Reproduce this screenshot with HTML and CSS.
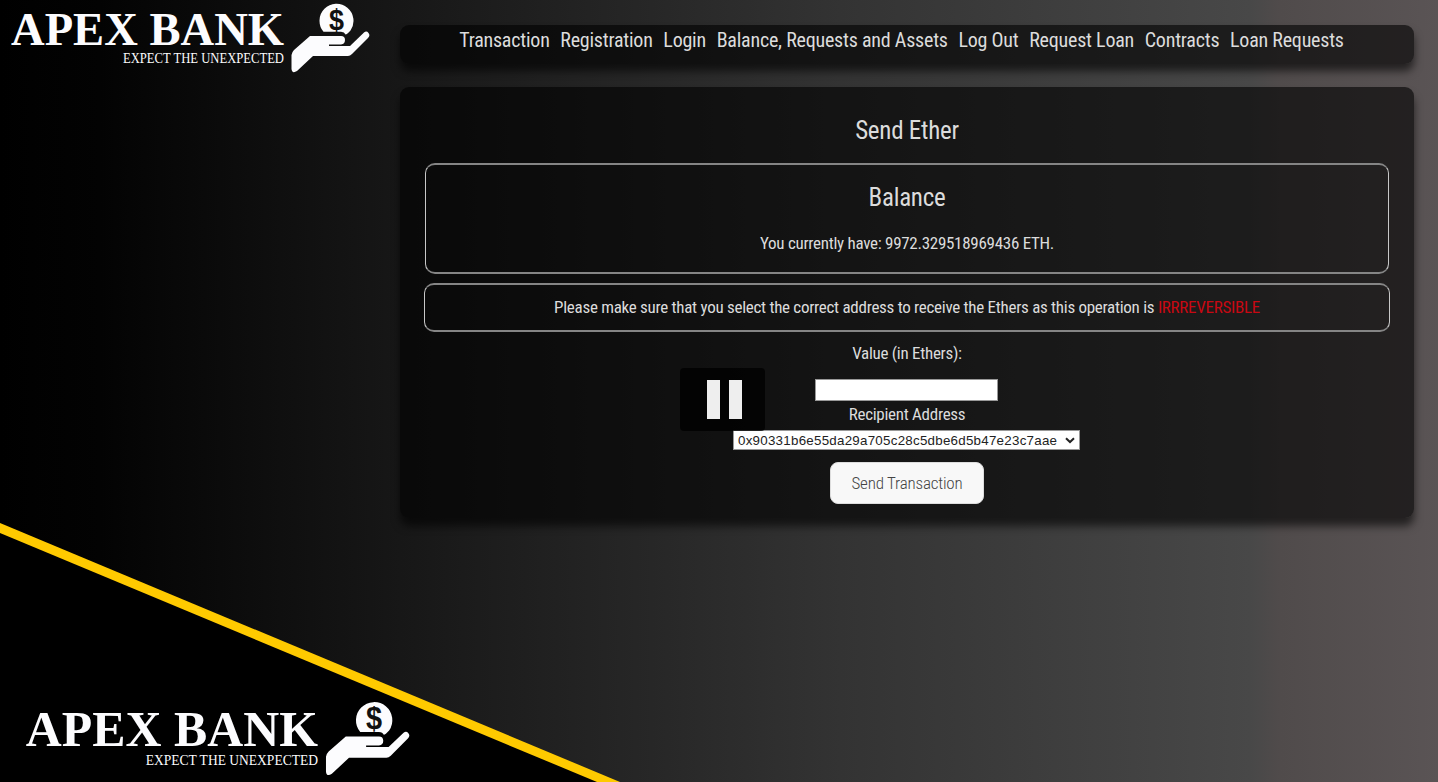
FILE: index.html
```html
<!DOCTYPE html>
<html lang="en">
<head>
<meta charset="utf-8">
<title>Apex Bank</title>
<link rel="stylesheet" href="styles.css">
</head>
<body>
<div class="page">
  <svg class="stripe" viewBox="0 0 640 282">
    <path fill="#000" d="M0 28V282H602Z"/>
    <path fill="#ffca00" d="M0 23V33L597 282H620Z"/>
  </svg>
  <aside class="side">
    <svg class="logo logo-top" viewBox="0 0 370 74" preserveAspectRatio="none">
      <text class="brand" x="11" y="45" textLength="273" lengthAdjust="spacingAndGlyphs">APEX BANK</text>
      <text class="tagline" x="123" y="62.500" textLength="161" lengthAdjust="spacingAndGlyphs">EXPECT THE UNEXPECTED</text>
      <path d="M323.500 31.800A17 17 0 1 1 350.500 30.500Q347 34.500 345.500 34.500Q344.500 32 341 31.800Z"/>
      <text class="dollar" x="329" y="29.500" textLength="15" lengthAdjust="spacingAndGlyphs">$</text>
      <path d="M310 36H341Q345 36 345 40T341 44.500H329V46H350L364 32.500Q366.500 30.500 368.500 33T368 38L352 54Q350 56 348 56H313L297 71Q292 74 291.500 69V55Q292 52 294 50Z"/>
    </svg>
    <svg class="logo logo-bottom" viewBox="0 0 370 74" preserveAspectRatio="none">
      <text class="brand" x="11" y="45" textLength="273" lengthAdjust="spacingAndGlyphs">APEX BANK</text>
      <text class="tagline" x="123" y="62.500" textLength="161" lengthAdjust="spacingAndGlyphs">EXPECT THE UNEXPECTED</text>
      <path d="M323.500 31.800A17 17 0 1 1 350.500 30.500Q347 34.500 345.500 34.500Q344.500 32 341 31.800Z"/>
      <text class="dollar" x="329" y="29.500" textLength="15" lengthAdjust="spacingAndGlyphs">$</text>
      <path d="M310 36H341Q345 36 345 40T341 44.500H329V46H350L364 32.500Q366.500 30.500 368.500 33T368 38L352 54Q350 56 348 56H313L297 71Q292 74 291.500 69V55Q292 52 294 50Z"/>
    </svg>
  </aside>
  <main class="main">
    <nav class="nav">
      <a>Transaction</a><a>Registration</a><a>Login</a><a>Balance, Requests and Assets</a><a>Log Out</a><a>Request Loan</a><a>Contracts</a><a>Loan Requests</a>
    </nav>
    <section class="card">
      <h1 class="title">Send Ether</h1>
      <div class="box balance">
        <h2 class="title">Balance</h2>
        <p class="line">You currently have: 9972.329518969436 ETH.</p>
      </div>
      <div class="box notice"><p class="line">Please make sure that you select the correct address to receive the Ethers as this operation is <span class="danger">IRRREVERSIBLE</span></p></div>
      <p class="line value">Value (in Ethers):</p>
      <input class="amount" type="text">
      <p class="line recipient">Recipient Address</p>
      <div class="select"><span>0x90331b6e55da29a705c28c5dbe6d5b47e23c7aae</span>
        <svg width="10" height="7" viewBox="0 0 10 7"><path d="M1 1.200L5 5L9 1.200" fill="none" stroke="#222" stroke-width="2"/></svg>
      </div>
      <button class="send"><span class="line">Send Transaction</span></button>
    </section>
  </main>
  <div class="pause"><i></i><i></i></div>
</div>
</body>
</html>
```
FILE: styles.css
```css
* { box-sizing: border-box; margin: 0; padding: 0; }
body { width: 1438px; height: 782px; overflow: hidden; font-family: "Roboto Condensed", Roboto, sans-serif; font-stretch: 75%; font-weight: 400; color: #dcdcdc; }
.page { position: relative; width: 1438px; height: 782px; display: flex; background: linear-gradient(90deg, #000 0, #030303 100px, #171717 400px, #333 840px, #484848 1250px, #504b4b 1280px, #5a5455 1438px); }
.stripe { position: absolute; left: 0; bottom: 0; width: 640px; height: 282px; }
.side { width: 400px; display: flex; flex-direction: column; justify-content: space-between; position: relative; }
.logo { fill: #fcfcfe; overflow: visible; flex: none; }
.logo-top { width: 370px; height: 74px; }
.logo-bottom { width: 396px; height: 79px; margin: 0 0 5px 14px; }
.brand { font: bold 47px "Liberation Serif", serif; }
.tagline { font: 14px "Liberation Serif", serif; }
.dollar { font: bold 29px "Liberation Sans", sans-serif; fill: #111; }
.main { width: 1014px; padding-top: 25px; position: relative; }
.nav { height: 39px; padding-right: 11px; display: flex; justify-content: center; gap: 10.700px; border-radius: 9px; background: rgba(0,0,0,.6); box-shadow: 0 7px 8px rgba(0,0,0,.6); font-size: 20px; line-height: 30px; letter-spacing: -.22px; white-space: nowrap; }
.card { margin-top: 23px; height: 431px; padding: 0 24px; display: flex; flex-direction: column; align-items: center; border-radius: 9px; background: rgba(0,0,0,.6); box-shadow: 0 8px 8px rgba(0,0,0,.6); }
.title { font-size: 25px; line-height: 30px; font-weight: 400; letter-spacing: -.25px; white-space: nowrap; }
.card > .title { margin-top: 29px; }
.line { font-size: 17px; line-height: 20px; letter-spacing: -.28px; white-space: nowrap; }
.box { border: solid; border-width: 2px 1px; border-color: #858585 #c8c8c8; border-radius: 10px; display: flex; flex-direction: column; align-items: center; flex: none; }
.balance { width: 964px; height: 111px; margin-top: 17px; padding-top: 18px; }
.balance .line { margin-top: 20px; }
.notice { width: 966px; height: 49px; margin-top: 9px; padding-top: 12px; }
.danger { color: #c80812; }
.value { margin-top: 11px; }
.amount { width: 183px; height: 22px; margin: 16px 1px 0 0; border: 1px solid #999; background: #fff; flex: none; }
.recipient { margin-top: 3px; }
.select { width: 347px; height: 20px; margin: 6px 1px 0 0; padding: 0 4px; display: flex; align-items: center; justify-content: space-between; background: #fff; border: 1px solid #999; color: #222; font: 13.333px "Liberation Sans", sans-serif; letter-spacing: .26px; flex: none; }
.send { width: 154px; height: 42px; margin-top: 12px; border: 1px solid #ddd; border-radius: 8px; background: #f8f8f8; color: #444; font: inherit; font-weight: 300; }
.send .line { letter-spacing: -.2px; }
.pause { position: absolute; left: 680px; top: 368px; width: 85px; height: 63px; padding-left: 4px; border-radius: 4px; background: rgba(0,0,0,.78); display: flex; justify-content: center; align-items: center; gap: 9px; }
.pause i { width: 13px; height: 39px; background: #eee; }
```
